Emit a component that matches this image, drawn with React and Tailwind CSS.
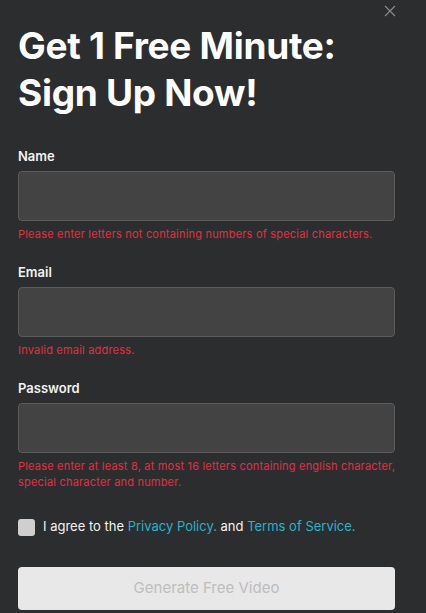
import React from "react";

function Field({ label, error }) {
  return (
    <div className="flex flex-col">
      <label className="text-[13px] font-semibold text-[#f2f2f2] leading-[16px]">{label}</label>
      <div className="mt-[7px] h-[50px] rounded-[4px] border border-[#5c5c5c] bg-[#434343]" />
      <div className="mt-[5px] text-[11px] leading-[16px] tracking-[0.2px] text-[#e0313f] whitespace-nowrap">{error}</div>
    </div>
  );
}

export default function App() {
  return (
    <div
      className="w-[426px] h-[613px] bg-[#2c2d2f] overflow-hidden relative"
      style={{ fontFamily: "Inter, 'Liberation Sans', sans-serif" }}
    >
      <button className="absolute right-[30px] top-[5px] text-[#8a8a8a]">
        <svg width="12" height="12" viewBox="0 0 12 12" stroke="currentColor" strokeWidth="1.2">
          <path d="M1 1L11 11M11 1L1 11" />
        </svg>
      </button>
      <div className="pl-[18px] pr-[31px] pt-[22px]">
        <h1 className="text-[37px] font-bold leading-[47px] text-white tracking-[-0.3px]">
          Get 1 Free Minute:
          <br />
          Sign Up Now!
        </h1>
        <div className="mt-[32px] flex flex-col gap-[22px]">
          <Field label="Name" error="Please enter letters not containing numbers of special characters." />
          <Field label="Email" error="Invalid email address." />
          <Field
            label="Password"
            error={<>Please enter at least 8, at most 16 letters containing english character,<br />special character and number.</>}
          />
        </div>
        <div className="mt-[27px] h-[20px] flex items-center gap-[8px]">
          <div className="w-[17px] h-[17px] rounded-[3px] bg-[#cfcfcf]" />
          <span className="text-[13px] text-[#f2f2f2]">
            I agree to the <span className="text-[#27b3c9]">Privacy Policy.</span> and{" "}
            <span className="text-[#27b3c9]">Terms of Service.</span>
          </span>
        </div>
        <button className="mt-[30px] w-full h-[43px] rounded-[4px] bg-[#e8e8e8] text-[15px] text-[#bdbdbd]">
          Generate Free Video
        </button>
      </div>
    </div>
  );
}
